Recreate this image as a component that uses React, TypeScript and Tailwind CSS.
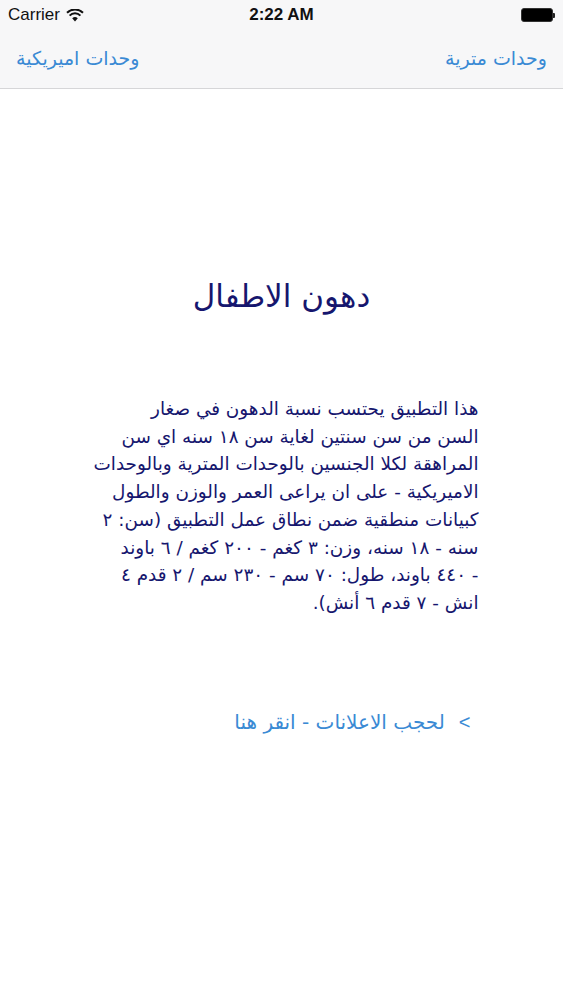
import React from "react";

const ar = { fontFamily: '"DejaVu Sans", "Noto Sans", sans-serif' };

export default function App() {
  const lines = [
    "هذا التطبيق يحتسب نسبة الدهون في صغار",
    "السن من سن سنتين لغاية سن ١٨ سنه اي سن",
    "المراهقة لكلا الجنسين بالوحدات المترية وبالوحدات",
    "الاميريكية - على ان يراعى العمر والوزن والطول",
    "كبيانات منطقية ضمن نطاق عمل التطبيق (سن: ٢",
    "سنه - ١٨ سنه، وزن: ٣ كغم - ٢٠٠ كغم / ٦ باوند",
    "- ٤٤٠ باوند، طول: ٧٠ سم - ٢٣٠ سم / ٢ قدم ٤",
    "انش - ٧ قدم ٦ أنش).",
  ];
  return (
    <div className="w-[563px] h-[1000px] bg-white flex flex-col">
      <div className="bg-[#f7f7f8] border-b border-[#d6d6d8]">
        <div className="h-[30px] flex items-center justify-between px-[8px] relative" style={{ fontFamily: '"Liberation Sans", Arial, sans-serif' }}>
          <div className="flex items-center gap-[6px] text-[17px] text-[#111]">
            <span>Carrier</span>
            <svg width="18" height="13" viewBox="0 0 18 13">
              <path d="M9 12.5 L6.2 9.3 A4 4 0 0 1 11.8 9.3 Z" fill="#111" />
              <path d="M3.6 6.6 A7.6 7.6 0 0 1 14.4 6.6" stroke="#111" strokeWidth="2" fill="none" />
              <path d="M1 3.8 A11.3 11.3 0 0 1 17 3.8" stroke="#111" strokeWidth="2" fill="none" />
            </svg>
          </div>
          <div className="absolute left-0 right-0 text-center text-[17px] font-bold text-[#111] pointer-events-none">2:22 AM</div>
          <div className="flex items-center">
            <div className="w-[32px] h-[14px] rounded-[3px] bg-black border border-[#333]" />
            <div className="w-[2px] h-[5px] bg-[#222] rounded-r-[1px]" />
          </div>
        </div>
        <div className="h-[58px] flex items-center justify-between px-[16px] text-[19px] text-[#3a8ad4] pb-[2px]" style={ar}>
          <span dir="rtl">وحدات اميريكية</span>
          <span dir="rtl">وحدات مترية</span>
        </div>
      </div>
      <div className="flex flex-col items-center">
        <div className="mt-[185px] text-[31px] text-[#16166e] leading-[44px]" dir="rtl" style={ar}>
          دهون الاطفال
        </div>
        <div className="mt-[77px] w-[384px] ml-[10px] flex flex-col text-[18.4px] leading-[27.7px] text-[#16166e]" style={ar}>
          {lines.map((l, i) => (
            <div key={i} dir="rtl" className="w-full whitespace-nowrap text-right">
              {l}
            </div>
          ))}
        </div>
        <div className="mt-[90px] w-[384px] ml-[10px] flex items-center justify-end gap-[14px] text-[20px] text-[#3a8ad4] pr-[8px]" style={ar}>
          <span dir="rtl">لحجب الاعلانات - انقر هنا</span>
          <span dir="ltr" style={{ fontFamily: '"Liberation Sans", sans-serif' }}>&lt;</span>
        </div>
      </div>
    </div>
  );
}
